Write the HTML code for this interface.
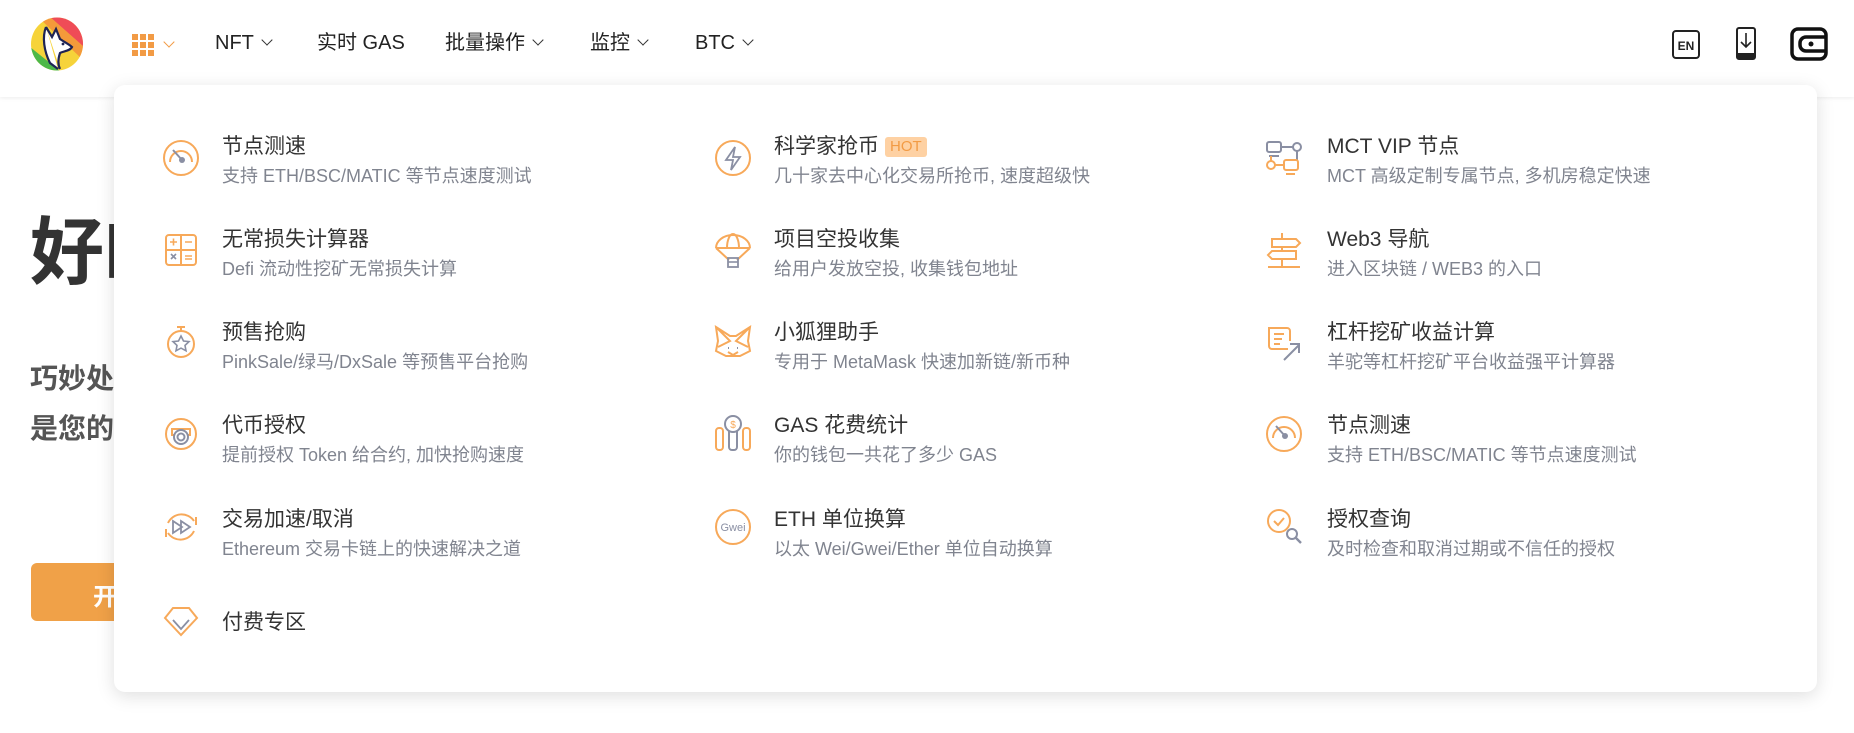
<!DOCTYPE html>
<html><head><meta charset="utf-8"><style>
*{margin:0;padding:0;box-sizing:border-box}
body{width:1854px;height:733px;overflow:hidden;background:#fff;font-family:"Liberation Sans","Noto Sans CJK SC",sans-serif;position:relative}
.hdr{position:absolute;left:0;top:0;width:1854px;height:97px;background:#fff;box-shadow:0 1px 4px rgba(0,0,0,.08)}
.nav{position:absolute;top:30px;font-size:20px;color:#222;line-height:26px}
.chev{display:inline-block;width:8px;height:8px;border-right:1.6px solid #333;border-bottom:1.6px solid #333;transform:rotate(45deg);margin-left:9px;position:relative;top:-5px}
.bg1{position:absolute;left:30px;top:193px;font-size:74px;font-weight:bold;color:#333}
.bg2{position:absolute;left:30px;font-size:28px;font-weight:bold;color:#555}
.btn{position:absolute;left:31px;top:563px;width:200px;height:58px;background:#f0a148;border-radius:6px;color:#fff;font-size:24px;font-weight:bold;padding:14px 0 0 62px}
.panel{position:absolute;left:114px;top:85px;width:1703px;height:607px;background:#fff;border-radius:11px;box-shadow:0 4px 18px rgba(0,0,0,.13)}
.arrow{position:absolute;left:144px;top:75px;width:0;height:0;border-left:11px solid transparent;border-right:11px solid transparent;border-bottom:11px solid #fff}
.t{position:absolute;font-size:21px;color:#333;line-height:24px;white-space:nowrap;margin-top:3px}
.s{position:absolute;font-size:18px;color:#80848f;line-height:20px;white-space:nowrap;margin-top:2px}
.ic{position:absolute;width:40px;height:40px}
.hot{display:inline-block;background:#fed1a3;color:#f29b45;font-size:15px;line-height:20px;padding:0 5px;border-radius:3px;margin-left:6px;vertical-align:2px}
</style></head><body>
<div class="bg1">好l</div>
<div class="bg2" style="top:357px">巧妙处</div>
<div class="bg2" style="top:407px">是您的</div>
<div class="btn">开</div>
<div style="position:absolute;left:1795px;top:569px;width:10px;height:1px;background:#555;transform:rotate(20deg)"></div>

<div class="hdr">
<svg style="position:absolute;left:30px;top:17px" width="54" height="54" viewBox="0 0 54 54">
<defs><clipPath id="c"><ellipse cx="27" cy="27" rx="26" ry="26.5"/></clipPath></defs>
<g clip-path="url(#c)"><rect width="54" height="54" fill="#f6d33a"/>
<path d="M0 30 L30 54 L0 54Z" fill="#4db848"/><path d="M20 0 L54 0 L54 30Z" fill="#ef4c57"/><path d="M54 30 L20 0 L8 0 L54 44Z" fill="#f49a3a"/></g>
<path d="M16 10 C12 20 14 34 20 46 L28 52 M16 10 L22 20 L26 12 L30 22 C36 26 40 28 42 30 C40 34 34 34 30 36 C28 42 28 48 30 52" fill="#fff" stroke="#1f2454" stroke-width="2.2"/>
<circle cx="33" cy="27" r="1.4" fill="#1f2454"/></svg>
<svg style="position:absolute;left:132px;top:34px" width="22" height="22" viewBox="0 0 22 22" fill="#f29b45">
<rect x="0" y="0" width="6" height="6"/><rect x="8" y="0" width="6" height="6"/><rect x="16" y="0" width="6" height="6"/>
<rect x="0" y="8" width="6" height="6"/><rect x="8" y="8" width="6" height="6"/><rect x="16" y="8" width="6" height="6"/>
<rect x="0" y="16" width="6" height="6"/><rect x="8" y="16" width="6" height="6"/><rect x="16" y="16" width="6" height="6"/></svg>
<span class="chev" style="position:absolute;left:165px;top:38px;border-color:#f29b45;margin:0"></span>
<div class="nav" style="left:215px">NFT<span class="chev"></span></div>
<div class="nav" style="left:317px">实时 GAS</div>
<div class="nav" style="left:445px">批量操作<span class="chev"></span></div>
<div class="nav" style="left:590px">监控<span class="chev"></span></div>
<div class="nav" style="left:695px">BTC<span class="chev"></span></div>
<svg style="position:absolute;left:1672px;top:30px" width="28" height="29" viewBox="0 0 28 29"><rect x="1" y="1" width="26" height="27" rx="3" fill="none" stroke="#222" stroke-width="2"/><text x="14" y="20" font-size="12" font-weight="bold" text-anchor="middle" font-family="Liberation Sans" fill="#222">EN</text></svg>
<svg style="position:absolute;left:1736px;top:27px" width="20" height="33" viewBox="0 0 20 33"><rect x="1" y="1" width="18" height="31" rx="2" fill="none" stroke="#222" stroke-width="2"/><rect x="1" y="26" width="18" height="6" fill="#222"/><path d="M10 6 V20 M5 15 L10 20 L15 15" fill="none" stroke="#222" stroke-width="1.6"/></svg>
<svg style="position:absolute;left:1790px;top:27px" width="38" height="34" viewBox="0 0 38 34"><rect x="2" y="2" width="34" height="30" rx="6" fill="none" stroke="#111" stroke-width="3.5"/><path d="M36 10 H16 a6 6 0 0 0 -6 6 v2 a6 6 0 0 0 6 6 H36" fill="none" stroke="#111" stroke-width="3.5"/><circle cx="21" cy="17" r="2.5" fill="#111"/></svg>
</div>

<div class="arrow"></div>
<div class="panel"></div>

<!-- col1 -->
<svg class="ic" style="left:161px;top:138px" viewBox="0 0 40 40"><circle cx="20" cy="20" r="17" fill="none" stroke="#f7a95a" stroke-width="2"/><path d="M9 24 a11 11 0 1 1 22 0" fill="none" stroke="#f7a95a" stroke-width="2"/><path d="M12 12 L21 22" stroke="#8a8fa3" stroke-width="2"/><circle cx="21" cy="22" r="3" fill="#8a8fa3"/></svg>
<div class="t" style="left:222px;top:132px">节点测速</div><div class="s" style="left:222px;top:164px">支持 ETH/BSC/MATIC 等节点速度测试</div>

<svg class="ic" style="left:161px;top:230px" viewBox="0 0 40 40"><rect x="5" y="5" width="30" height="30" rx="3" fill="none" stroke="#f7a95a" stroke-width="2"/><path d="M20 5V35M5 20H35" stroke="#f7a95a" stroke-width="2"/><path d="M9 12h7M12.5 8.5v7M24 12h7M24 26h7M24 29h7" stroke="#f7a95a" stroke-width="1.6"/><path d="M10 24l5 5M15 24l-5 5" stroke="#8a8fa3" stroke-width="1.6"/></svg>
<div class="t" style="left:222px;top:225px">无常损失计算器</div><div class="s" style="left:222px;top:257px">Defi 流动性挖矿无常损失计算</div>

<svg class="ic" style="left:161px;top:322px" viewBox="0 0 40 40"><circle cx="20" cy="22" r="13" fill="none" stroke="#f7a95a" stroke-width="2"/><path d="M16 5h8M20 5v4" stroke="#f7a95a" stroke-width="2"/><path d="M20 14l2.5 5 5.5.6-4 3.8 1 5.4-5-2.7-5 2.7 1-5.4-4-3.8 5.5-.6z" fill="none" stroke="#8a8fa3" stroke-width="1.6"/></svg>
<div class="t" style="left:222px;top:318px">预售抢购</div><div class="s" style="left:222px;top:350px">PinkSale/绿马/DxSale 等预售平台抢购</div>

<svg class="ic" style="left:161px;top:414px" viewBox="0 0 40 40"><circle cx="20" cy="20" r="15" fill="none" stroke="#f7a95a" stroke-width="2"/><path d="M11 15h18v6H11z" fill="none" stroke="#f7a95a" stroke-width="2"/><circle cx="20" cy="23" r="7" fill="#fff" stroke="#8a8fa3" stroke-width="2"/><circle cx="20" cy="23" r="3.5" fill="none" stroke="#8a8fa3" stroke-width="2"/></svg>
<div class="t" style="left:222px;top:411px">代币授权</div><div class="s" style="left:222px;top:443px">提前授权 Token 给合约, 加快抢购速度</div>

<svg class="ic" style="left:161px;top:507px" viewBox="0 0 40 40"><path d="M33 14a15 15 0 0 0-26 2M7 26a15 15 0 0 0 26-2" fill="none" stroke="#f7a95a" stroke-width="2"/><path d="M5 22v8M35 10v8" stroke="#f7a95a" stroke-width="2"/><path d="M12 14l9 6-9 6zM20 14l9 6-9 6z" fill="none" stroke="#8a8fa3" stroke-width="1.8"/></svg>
<div class="t" style="left:222px;top:505px">交易加速/取消</div><div class="s" style="left:222px;top:537px">Ethereum 交易卡链上的快速解决之道</div>

<svg class="ic" style="left:161px;top:600px" viewBox="0 0 40 40"><path d="M4 18L12 8h16l8 10-16 17z" fill="none" stroke="#f7a95a" stroke-width="2"/><path d="M12 20l8 9 8-9" fill="none" stroke="#8a8fa3" stroke-width="1.8"/></svg>
<div class="t" style="left:222px;top:608px">付费专区</div>

<!-- col2 -->
<svg class="ic" style="left:713px;top:138px" viewBox="0 0 40 40"><circle cx="20" cy="20" r="17" fill="none" stroke="#f7a95a" stroke-width="2"/><path d="M22 9l-9 13h7l-2 10 9-13h-7z" fill="none" stroke="#8a8fa3" stroke-width="1.8"/></svg>
<div class="t" style="left:774px;top:132px">科学家抢币<span class="hot">HOT</span></div><div class="s" style="left:774px;top:164px">几十家去中心化交易所抢币, 速度超级快</div>

<svg class="ic" style="left:713px;top:230px" viewBox="0 0 40 40"><path d="M3 18a17 13 0 0 1 34 0M3 18l13 12M37 18L24 30M3 18h34M14 18a6 14 0 0 1 12 0" fill="none" stroke="#f7a95a" stroke-width="2"/><rect x="15" y="28" width="10" height="9" fill="none" stroke="#8a8fa3" stroke-width="1.8"/><path d="M15 32h10" stroke="#8a8fa3" stroke-width="1.6"/></svg>
<div class="t" style="left:774px;top:225px">项目空投收集</div><div class="s" style="left:774px;top:257px">给用户发放空投, 收集钱包地址</div>

<svg class="ic" style="left:713px;top:322px" viewBox="0 0 40 40"><path d="M3 5l14 9h6l14-9-2 14 2 10-10 5h-14l-10-5 2-10z M3 5l14 14-12 6M37 5L23 19l12 6M15 30l5 3 5-3" fill="none" stroke="#f7a95a" stroke-width="2"/><path d="M15 26h1M24 26h1" stroke="#8a8fa3" stroke-width="2"/></svg>
<div class="t" style="left:774px;top:318px">小狐狸助手</div><div class="s" style="left:774px;top:350px">专用于 MetaMask 快速加新链/新币种</div>

<svg class="ic" style="left:713px;top:414px" viewBox="0 0 40 40"><rect x="3" y="14" width="7" height="22" rx="3" fill="none" stroke="#f7a95a" stroke-width="2"/><rect x="30" y="14" width="7" height="22" rx="3" fill="none" stroke="#f7a95a" stroke-width="2"/><rect x="16" y="14" width="8" height="22" rx="3" fill="none" stroke="#8a8fa3" stroke-width="2"/><circle cx="20" cy="10" r="8" fill="#fff" stroke="#8a8fa3" stroke-width="2"/><text x="20" y="14" font-size="10" text-anchor="middle" fill="#f7a95a" font-family="Liberation Sans">$</text></svg>
<div class="t" style="left:774px;top:411px">GAS 花费统计</div><div class="s" style="left:774px;top:443px">你的钱包一共花了多少 GAS</div>

<svg class="ic" style="left:713px;top:507px" viewBox="0 0 40 40"><circle cx="20" cy="20" r="17" fill="none" stroke="#f7a95a" stroke-width="2"/><text x="20" y="24" font-size="11" text-anchor="middle" fill="#8a8fa3" font-family="Liberation Sans">Gwei</text></svg>
<div class="t" style="left:774px;top:505px">ETH 单位换算</div><div class="s" style="left:774px;top:537px">以太 Wei/Gwei/Ether 单位自动换算</div>

<!-- col3 -->
<svg class="ic" style="left:1264px;top:138px" viewBox="0 0 40 40"><rect x="3" y="4" width="14" height="10" rx="2" fill="none" stroke="#8a8fa3" stroke-width="2"/><path d="M17 9h12M33 13v10M5 18h10" stroke="#8a8fa3" stroke-width="2"/><circle cx="33" cy="9" r="4" fill="none" stroke="#8a8fa3" stroke-width="2"/><rect x="20" y="22" width="14" height="10" rx="2" fill="none" stroke="#f7a95a" stroke-width="2"/><circle cx="7" cy="27" r="4" fill="none" stroke="#f7a95a" stroke-width="2"/><path d="M11 27h9M7 18v5M22 36h9" stroke="#f7a95a" stroke-width="2"/></svg>
<div class="t" style="left:1327px;top:132px">MCT VIP 节点</div><div class="s" style="left:1327px;top:164px">MCT 高级定制专属节点, 多机房稳定快速</div>

<svg class="ic" style="left:1264px;top:230px" viewBox="0 0 40 40"><path d="M18 3v6M18 17v4M18 29v8M4 37h32M8 9h24l4 4-4 4H8zM32 21H8l-4 4 4 4h24z" fill="none" stroke="#f7a95a" stroke-width="2"/></svg>
<div class="t" style="left:1327px;top:225px">Web3 导航</div><div class="s" style="left:1327px;top:257px">进入区块链 / WEB3 的入口</div>

<svg class="ic" style="left:1264px;top:322px" viewBox="0 0 40 40"><path d="M24 27H8a3 3 0 0 1-3-3V6h18a3 3 0 0 1 3 3v10" fill="none" stroke="#f7a95a" stroke-width="2"/><path d="M10 12h10M10 17h8M10 22h6" stroke="#f7a95a" stroke-width="2"/><path d="M20 38l15-15M26 22h9v9" fill="none" stroke="#8a8fa3" stroke-width="2"/></svg>
<div class="t" style="left:1327px;top:318px">杠杆挖矿收益计算</div><div class="s" style="left:1327px;top:350px">羊驼等杠杆挖矿平台收益强平计算器</div>

<svg class="ic" style="left:1264px;top:414px" viewBox="0 0 40 40"><circle cx="20" cy="20" r="17" fill="none" stroke="#f7a95a" stroke-width="2"/><path d="M9 24a11 11 0 1 1 22 0" fill="none" stroke="#f7a95a" stroke-width="2"/><path d="M12 12L21 22" stroke="#8a8fa3" stroke-width="2"/><circle cx="21" cy="22" r="3" fill="#8a8fa3"/></svg>
<div class="t" style="left:1327px;top:411px">节点测速</div><div class="s" style="left:1327px;top:443px">支持 ETH/BSC/MATIC 等节点速度测试</div>

<svg class="ic" style="left:1264px;top:507px" viewBox="0 0 40 40"><circle cx="15" cy="14" r="11" fill="none" stroke="#f7a95a" stroke-width="2"/><path d="M10 14l4 4 6-7" fill="none" stroke="#f7a95a" stroke-width="2"/><circle cx="28" cy="27" r="5" fill="none" stroke="#8a8fa3" stroke-width="2"/><path d="M31.5 30.5L37 36" stroke="#8a8fa3" stroke-width="2.4"/></svg>
<div class="t" style="left:1327px;top:505px">授权查询</div><div class="s" style="left:1327px;top:537px">及时检查和取消过期或不信任的授权</div>
</body></html>
